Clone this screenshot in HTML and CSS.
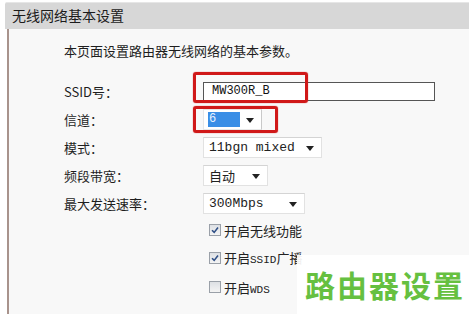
FILE: index.html
```html
<!DOCTYPE html>
<html lang="zh-CN">
<head>
  <meta charset="UTF-8">
  <title>无线网络基本设置</title>
  <link rel="stylesheet" href="styles.css">
</head>
<body>
  <div class="panel">
    <div class="panel-title">无线网络基本设置</div>
    <div class="panel-body">
      <p class="intro">本页面设置路由器无线网络的基本参数。</p>

      <div class="form">
        <div class="label">SSID号：</div>
        <div class="field">
          <div class="text-input">MW300R_B</div>
          <span class="mark mark-ssid"></span>
        </div>

        <div class="label">信道：</div>
        <div class="field">
          <div class="select sel-channel"><span class="picked">6</span><span class="arrow"></span></div>
          <span class="mark mark-channel"></span>
        </div>

        <div class="label">模式：</div>
        <div class="field">
          <div class="select sel-mode"><span class="val">11bgn mixed</span><span class="arrow"></span></div>
        </div>

        <div class="label">频段带宽：</div>
        <div class="field">
          <div class="select sel-width"><span class="val cjk">自动</span><span class="arrow"></span></div>
        </div>

        <div class="label">最大发送速率：</div>
        <div class="field">
          <div class="select sel-rate"><span class="val">300Mbps</span><span class="arrow"></span></div>
        </div>

        <div class="label"></div>
        <div class="field check-row">
          <span class="box checked"><svg viewBox="0 0 10 10"><path d="M2 5.2 L4.2 7.4 L8 2.6" /></svg></span>
          <span>开启无线功能</span>
        </div>

        <div class="label"></div>
        <div class="field check-row">
          <span class="box checked"><svg viewBox="0 0 10 10"><path d="M2 5.2 L4.2 7.4 L8 2.6" /></svg></span>
          <span>开启<span class="mono">SSID</span>广播</span>
        </div>

        <div class="label"></div>
        <div class="field check-row">
          <span class="box"></span>
          <span>开启<span class="mono">WDS</span></span>
        </div>
      </div>
    </div>
  </div>

  <div class="watermark">路由器设置</div>
</body>
</html>
```

FILE: styles.css
```css
body {
  margin: 0;
  background: #ffffff;
  font-family: "Noto Sans CJK SC", "DejaVu Sans", sans-serif;
  font-size: 13px;
  color: #222;
  width: 469px;
  height: 314px;
  overflow: hidden;
  position: relative;
}

.panel {
  margin-left: 5px;
  padding-top: 2px;
}

.panel-title {
  height: 26px;
  line-height: 25px;
  background: #d7d7d7;
  border-top: 1px solid #e6e6e6;
  border-radius: 2px 0 0 0;
  padding-left: 7px;
  font-size: 14px;
  color: #1c1c1c;
}

.panel-body {
  margin-left: 2px;
  border-left: 2px solid #a8938c;
  background: #f8f8f8;
  height: 290px;
  padding-left: 55px;
}

.intro {
  margin: 0;
  padding-top: 13px;
  height: 27px;
  line-height: 18px;
  font-size: 13px;
  color: #1e1e1e;
}

.form {
  display: grid;
  grid-template-columns: 139px 240px;
  grid-template-rows: 28px 28px 28px 28px 28px 26px 29px 30px;
  padding-top: 8px;
}

.label {
  display: flex;
  align-items: center;
  font-size: 13px;
  color: #1e1e1e;
}

.field {
  position: relative;
  display: flex;
  align-items: center;
}

.text-input {
  width: 222px;
  height: 17px;
  border: 1px solid #555;
  background: #fff;
  padding-left: 8px;
  font-family: "Liberation Mono", "DejaVu Sans Mono", monospace;
  font-size: 12px;
  line-height: 17px;
  color: #111;
}

.mark {
  position: absolute;
  border: 3px solid #d01818;
  border-radius: 3px;
  box-shadow: 0 0 1px #d01818;
}

.mark-ssid {
  left: -10px;
  top: -5px;
  width: 109px;
  height: 25px;
}

.mark-channel {
  left: -10px;
  top: 1px;
  width: 79px;
  height: 21px;
}

.select {
  height: 21px;
  background: #fff;
  border: 1px solid #e2e2e2;
  border-top-color: #d4d4d4;
  display: flex;
  align-items: center;
  padding-left: 5px;
  box-sizing: border-box;
  position: relative;
  font-family: "Liberation Mono", "DejaVu Sans Mono", monospace;
  font-size: 13px;
  color: #222;
}

.select .arrow {
  position: absolute;
  right: 7px;
  top: 8px;
  border-left: 4px solid transparent;
  border-right: 4px solid transparent;
  border-top: 5px solid #222;
}

.select .cjk {
  font-family: "Noto Sans CJK SC", sans-serif;
}

.sel-channel {
  width: 59px;
  border-color: #e6e6e6;
  border-right-color: #c9c9c9;
  padding-left: 4px;
}

.picked {
  background: #3a8ee6;
  color: #e8f2ff;
  width: 31px;
  height: 15px;
  line-height: 15px;
  padding-left: 1px;
  font-size: 12px;
}

.sel-mode {
  width: 119px;
}

.sel-width {
  width: 65px;
}

.sel-rate {
  width: 102px;
}

.check-row {
  padding-left: 6px;
  gap: 3px;
  font-size: 13px;
  color: #222;
}

.mono {
  font-family: "Liberation Mono", "DejaVu Sans Mono", monospace;
  font-size: 11px;
}

.box {
  width: 10px;
  height: 10px;
  border: 1px solid #9aa0a8;
  background: linear-gradient(#dde0e4, #f4f4f4);
  display: inline-block;
}

.box svg {
  display: block;
  width: 10px;
  height: 10px;
}

.box svg path {
  fill: none;
  stroke: #2f4f86;
  stroke-width: 1.6;
}

.watermark {
  position: absolute;
  left: 297px;
  top: 255px;
  right: 0;
  bottom: 0;
  background: rgba(255, 255, 255, 0.93);
  color: #66c040;
  font-family: "Noto Sans CJK SC", sans-serif;
  font-weight: 700;
  font-size: 30px;
  letter-spacing: 2px;
  padding-left: 8px;
  line-height: 58px;
}
```
